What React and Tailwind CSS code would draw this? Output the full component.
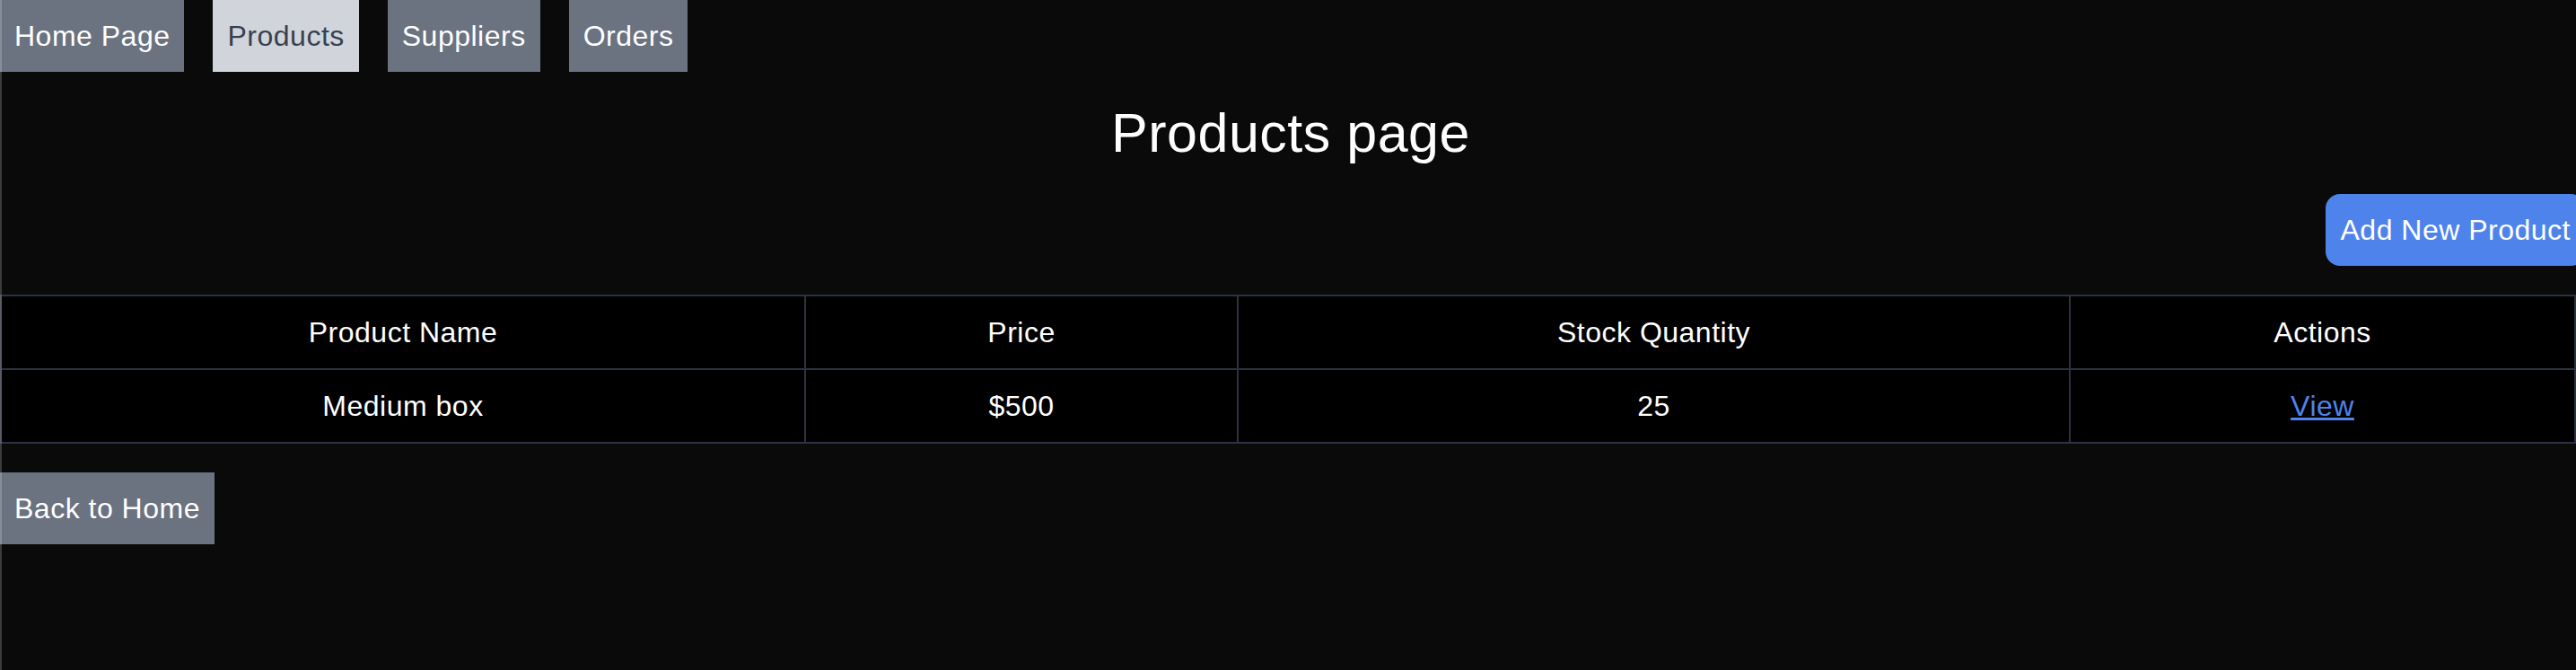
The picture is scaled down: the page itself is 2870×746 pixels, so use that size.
import React from 'react';

const navItems = ['Home Page', 'Products', 'Suppliers', 'Orders'];

const products = [
  { id: 1, name: 'Medium box', price: 500, stock: 25 },
];

export default function App() {
  const active = 'Products';

  return (
    <div className="relative min-h-[746px] overflow-hidden bg-[#0a0a0a] text-white tracking-[0.5px] font-['Liberation_Sans',Arial,sans-serif]">
      {/* thin window edge on the left */}
      <div className="absolute left-0 top-0 bottom-0 w-[2px] bg-white/20" />

      <nav className="flex gap-8">
        {navItems.map((item) => (
          <button
            key={item}
            className={
              item === active
                ? 'h-20 px-4 text-[32px] leading-[48px] bg-[#d1d5db] text-[#374151]'
                : 'h-20 px-4 text-[32px] leading-[48px] bg-[#6b7280] text-white'
            }
          >
            {item}
          </button>
        ))}
      </nav>

      <h1 className="mt-[38px] pl-[6px] text-center text-[61px] leading-none font-normal">Products page</h1>

      <div className="flex justify-end mt-[37px]">
        <button className="-mr-[10px] h-20 px-4 text-[32px] leading-[48px] rounded-2xl bg-[#4f83ec] text-white">
          Add New Product
        </button>
      </div>

      <table className="mt-[32px] w-full border-collapse bg-black text-[32px] leading-[48px]">
        <thead>
          <tr>
            <th className="w-[896px] border-2 border-[#2c3340] py-4 font-normal">Product Name</th>
            <th className="w-[482px] border-2 border-[#2c3340] py-4 font-normal">Price</th>
            <th className="w-[927px] border-2 border-[#2c3340] py-4 font-normal">Stock Quantity</th>
            <th className="border-2 border-[#2c3340] py-4 font-normal">Actions</th>
          </tr>
        </thead>
        <tbody>
          {products.map((p) => (
            <tr key={p.id}>
              <td className="border-2 border-[#2c3340] py-4 text-center">{p.name}</td>
              <td className="border-2 border-[#2c3340] py-4 text-center">${p.price}</td>
              <td className="border-2 border-[#2c3340] py-4 text-center">{p.stock}</td>
              <td className="border-2 border-[#2c3340] py-4 text-center">
                <a href="#" className="text-[#4f83ec] underline">View</a>
              </td>
            </tr>
          ))}
        </tbody>
      </table>

      <button className="mt-[32px] h-20 px-4 text-[32px] leading-[48px] bg-[#6b7280] text-white">
        Back to Home
      </button>
    </div>
  );
}
